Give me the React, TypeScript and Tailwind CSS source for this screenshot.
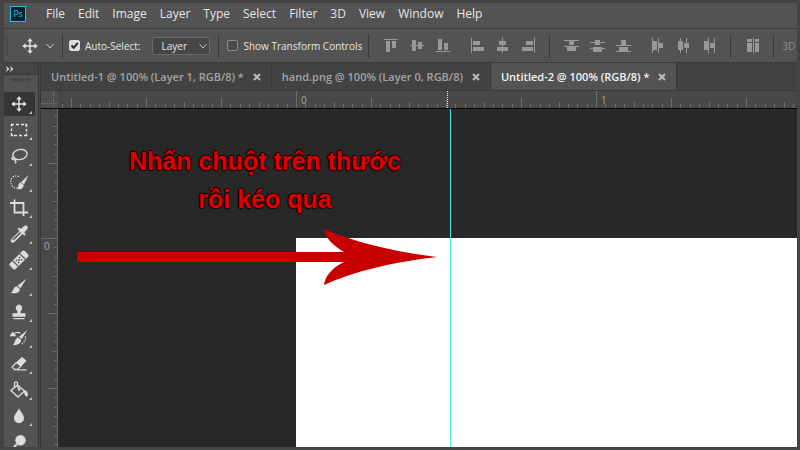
import type { ReactNode } from "react";

const menus = ["File", "Edit", "Image", "Layer", "Type", "Select", "Filter", "3D", "View", "Window", "Help"];

const tabs = [
  { title: "Untitled-1 @ 100% (Layer 1, RGB/8) *", active: false },
  { title: "hand.png @ 100% (Layer 0, RGB/8)", active: false },
  { title: "Untitled-2 @ 100% (RGB/8) *", active: true },
];

function MoveIcon() {
  return (
    <svg viewBox="0 0 16 16" className="size-4 shrink-0" fill="#e4e4e4">
      <path d="M7.3 3h1.4v4.3H13v1.4H8.7V13H7.3V8.7H3V7.3h4.3z" />
      <path d="M8 0.3l2.8 3.3H5.2zM8 15.7l2.8-3.3H5.2zM0.3 8l3.3-2.8v5.6zM15.7 8l-3.3-2.8v5.6z" />
    </svg>
  );
}

const c = "#dcdcdc";

const tools: { name: string; art: ReactNode; corner: boolean }[] = [
  {
    name: "Move",
    corner: true,
    art: (
      <g fill="#e8e8e8">
        <path d="M9.3 4h1.4v5.3H16v1.4h-5.3V16H9.3v-5.3H4V9.3h5.3z" />
        <path d="M10 2.3l2.8 3.3H7.2zM10 17.7l2.8-3.3H7.2zM2.3 10l3.3-2.8v5.6zM17.7 10l-3.3-2.8v5.6z" />
      </g>
    ),
  },
  {
    name: "Marquee",
    corner: true,
    art: <path d="M2.500 6.500V4.500H5M7 4.500h3M12 4.500h3M16 4.500h1.500V7M17.500 9v2.500M17.500 13.500v2H15M13 15.500h-3M8 15.500H5M4 15.500H2.500V13M2.500 11V8.500" fill="none" stroke="#e8e8e8" strokeWidth="1.400" />,
  },
  {
    name: "Lasso",
    corner: true,
    art: (
      <g fill="none" stroke={c} strokeWidth="1.400">
        <ellipse cx="11" cy="8.500" rx="7.200" ry="5" transform="rotate(-12 11 8.500)" />
        <path d="M5 11.500c-2.500-.5-2.800 1.500-1 2 1.700.2 2.500-1 1-2M5.300 13.500c1.500 1 1.800 2.500 1 4" />
      </g>
    ),
  },
  {
    name: "Quick selection",
    corner: true,
    art: (
      <g>
        <path d="M10 4.500C5 2.500 1.500 6 1.800 10c.2 4 3.500 6.500 6.500 5.800" fill="none" stroke={c} strokeWidth="1.300" strokeDasharray="1.300 1.300" />
        <path d="M19.500 3l-4.500 9.500-3-2.200zM11.500 10.500l3 2.200c.5 3.500-3 5.300-6.500 4.300 1.700-1 .5-5.500 3.500-6.500z" fill={c} />
      </g>
    ),
  },
  {
    name: "Crop",
    corner: true,
    art: <path d="M1 5h13.500v10M5.500 1.500v13H19M14.500 14v4" fill="none" stroke={c} strokeWidth="1.800" />,
  },
  {
    name: "Eyedropper",
    corner: true,
    art: (
      <g>
        <path d="M12 8l-8 8-.5 1 1-.5 8-8" fill="none" stroke={c} strokeWidth="3.600" strokeLinejoin="round" />
        <path d="M11.500 8.500l-7.500 7.500" fill="none" stroke="#535353" strokeWidth="1.600" />
        <path d="M8.500 5l1.500-1.500 2 1.500 2.700-2.700c2.900-2 5.300.7 3.300 3.300l-2.700 2.700 1.500 2-1.500 1.500z" fill={c} />
      </g>
    ),
  },
  {
    name: "Healing brush",
    corner: true,
    art: (
      <g transform="rotate(-45 10 10)">
        <rect x="-0.500" y="6" width="21" height="8" rx="1.800" fill={c} />
        <path d="M5 6v8M15 6v8" stroke="#535353" strokeWidth="1.200" />
        <path d="M7.200 7.700h1.500v1.500H7.200zM11.300 7.700h1.500v1.500h-1.500zM9.200 9.200h1.600v1.600H9.200zM7.200 10.800h1.500v1.500H7.200zM11.300 10.800h1.500v1.500h-1.500z" fill="#535353" />
      </g>
    ),
  },
  {
    name: "Brush",
    corner: true,
    art: <path d="M17.500 2.500l-6 9.800-3-2.600zM7.800 10.300l3 2.600c.3 3.700-4.500 5.200-9 3.800 2.800-1 2.300-5.900 6-6.400z" fill={c} />,
  },
  {
    name: "Clone stamp",
    corner: true,
    art: <path d="M10 2.500a3.500 3.500 0 0 1 2 6.200c-.6.700-.6 1.600-.3 2.500H16.500v3.600h-13v-3.600h4.800c.3-.9.300-1.800-.3-2.500A3.500 3.500 0 0 1 10 2.500zM4.500 16h11v1.300h-11z" fill={c} />,
  },
  {
    name: "History brush",
    corner: true,
    art: (
      <g>
        <path d="M18.500 2l-5.800 9-2.700-2.200zM9.300 9.500l2.700 2.300c.3 3.700-3.300 5.700-8.200 5.400 2.300-1.500 1.500-6.700 5.500-7.700z" fill={c} />
        <path d="M0.500 8.200L3.500 3.700l4.200 4.500z" fill={c} />
        <path d="M5 5.800c2-1.700 4.500-1.700 6.500-.5" fill="none" stroke={c} strokeWidth="1.300" />
        <path d="M16.300 8.500c.8 3-.8 6-3.500 7.500" fill="none" stroke={c} strokeWidth="1.300" strokeDasharray="1.200 1.300" />
      </g>
    ),
  },
  {
    name: "Eraser",
    corner: true,
    art: (
      <g>
        <path d="M13 3.500l4 3.300-5 5.200-4.500-3.500z" fill={c} stroke={c} strokeLinejoin="round" />
        <path d="M7.500 8.500l4.500 3.500-3.500 3.500H5.500L3 13z" fill="none" stroke={c} strokeWidth="1.300" strokeLinejoin="round" />
        <path d="M8 15.900h9.500" stroke={c} strokeWidth="1.200" />
      </g>
    ),
  },
  {
    name: "Paint bucket",
    corner: true,
    art: (
      <g>
        <path d="M8.500 5l7 6-6.500 6-7-6.500z" fill="none" stroke={c} strokeWidth="1.400" />
        <path d="M5.500 8V3.300c0-2 3-2 3 0V6c0 1.500 1 2 1.500 3" fill="none" stroke={c} strokeWidth="1.300" />
        <circle cx="10.200" cy="9.500" r="1.300" fill={c} />
        <path d="M14 9.500c3 .5 5 2.500 5 5 0 1.500-.8 2-1.500 2-1.800 0-2-3.500-3.500-7z" fill={c} />
      </g>
    ),
  },
  {
    name: "Blur",
    corner: true,
    art: <path d="M10 2c.6 3 5 6.100 5 10.200a5 5 0 0 1-10 0C5 8.100 9.400 5 10 2z" fill={c} />,
  },
  {
    name: "Dodge",
    corner: false,
    art: (
      <g>
        <circle cx="11.500" cy="8.300" r="5.200" fill={c} />
        <path d="M8 12l-5 5.500" stroke={c} strokeWidth="2" />
      </g>
    ),
  },
];

const alignGroups: { name: string; d: string }[][] = [
  [
    { name: "Align top edges", d: "M1 1h14v1H1zM3 3h4v11H3zM9 3h4v7H9z" },
    { name: "Align vertical centers", d: "M1 7h14v1H1zM3 2h4v11H3zM9 4h4v7H9z" },
    { name: "Align bottom edges", d: "M1 13h14v1H1zM3 1h4v11H3zM9 5h4v7H9z" },
  ],
  [
    { name: "Align left edges", d: "M2 0h1v15H2zM4 3h7v4H4zM4 9h11v4H4z" },
    { name: "Align horizontal centers", d: "M7 0h1v15H7zM4 3h7v4H4zM2 9h11v4H2z" },
    { name: "Align right edges", d: "M13 0h1v15h-1zM5 3h7v4H5zM1 9h11v4H1z" },
  ],
  [
    { name: "Distribute top edges", d: "M0 2h15v1H0zM5 3h5v4H5zM0 8h15v1H0zM3 9h9v4H3z" },
    { name: "Distribute vertical centers", d: "M0 4h15v1H0zM5 2h5v5H5zM0 10h15v1H0zM3 9h9v5H3z" },
    { name: "Distribute bottom edges", d: "M0 7h15v1H0zM5 2h5v5H5zM0 13h15v1H0zM3 9h9v4H3z" },
  ],
  [
    { name: "Distribute left edges", d: "M2 0h1v15H2zM3 3h4v9H3zM8 0h1v15H8zM9 5h4v5H9z" },
    { name: "Distribute horizontal centers", d: "M4 0h1v15H4zM2 3h5v9H2zM10 0h1v15h-1zM8 5h5v5H8z" },
    { name: "Distribute right edges", d: "M6 0h1v15H6zM2 3h4v9H2zM12 0h1v15h-1zM8 5h4v5H8z" },
  ],
];

function AlignGroup({ items }: { items: { name: string; d: string }[] }) {
  return (
    <div className="flex shrink-0 gap-2.5">
      {items.map((item) => (
        <button key={item.name} type="button" aria-label={item.name} className="size-4">
          <svg viewBox="0 0 16 16" className="size-4" fill="#989898" shapeRendering="crispEdges">
            <path d={item.d} />
          </svg>
        </button>
      ))}
    </div>
  );
}

function Divider() {
  return <div className="h-6 w-px shrink-0 bg-[#3a3a3a]" />;
}

const INCH = 300;
const STEP = INCH / 32;

function tickLength(i: number) {
  if (i % 32 === 0) return 17;
  if (i % 8 === 0) return 10;
  if (i % 4 === 0) return 6;
  return 4;
}

function TopRuler() {
  const zero = 239;
  const ticks = Array.from({ length: 240 }, (_, k) => k - 25);
  return (
    <svg className="h-[17px] min-w-0 flex-1" aria-hidden="true">
      {ticks.map((i) => (
        <rect key={i} x={Math.round(zero + i * STEP) - 1} y={17 - tickLength(i)} width="1" height={tickLength(i)} fill="#6e6e6e" />
      ))}
      {[0, 1].map((n) => (
        <text key={n} x={zero + 4 + n * INCH} y="13" fontSize="10" fill="#a4a4a4">{n}</text>
      ))}
      <path d="M389.500 0v17" stroke="#e8e8e8" strokeDasharray="1 1" />
    </svg>
  );
}

function SideRuler() {
  const zero = 129;
  const ticks = Array.from({ length: 160 }, (_, k) => k - 13);
  return (
    <svg className="h-full w-[17px] shrink-0 border-r border-[#6c6c6c]" aria-hidden="true">
      {ticks.map((i) => (
        <rect key={i} x={17 - tickLength(i)} y={Math.round(zero + i * STEP)} width={tickLength(i)} height="1" fill="#6a6a6a" />
      ))}
      <text x="3" y="141" fontSize="10" fill="#a4a4a4">0</text>
    </svg>
  );
}

export default function App() {
  return (
    <div className="flex h-screen flex-col overflow-hidden bg-[#444444] pt-[3px] pr-[3px] pb-[3px] pl-1 font-['Open_Sans','Noto_Sans',sans-serif] text-[#e6e6e6]">
      <nav className="flex h-[25px] shrink-0 items-center bg-[#535353] pb-1 pl-1.5" aria-label="Main">
        <div className="flex size-4 shrink-0 items-center justify-center border border-[#26bdec] bg-[#04202e] text-[9px] leading-none text-[#35c3ee]">Ps</div>
        <div className="ml-5 flex gap-[13px] text-xs leading-4">
          {menus.map((m) => (
            <button key={m} type="button">{m}</button>
          ))}
        </div>
      </nav>

      <div className="flex h-[35px] shrink-0 items-center overflow-hidden border-y border-[#3c3c3c] bg-[#535353] text-[10px] leading-4 whitespace-nowrap">
        <div className="ml-px h-5 w-[3px] shrink-0 bg-[repeating-linear-gradient(to_bottom,#444444_0_1px,#535353_1px_2px)]" />
        <div className="ml-3.5 flex shrink-0 items-center gap-2">
          <MoveIcon />
          <svg viewBox="0 0 8 8" className="size-2" fill="none" stroke="#c8c8c8" aria-hidden="true"><path d="M.5 2L4 6l3.500-4" /></svg>
        </div>
        <div className="ml-2 shrink-0"><Divider /></div>
        <label className="ml-1.5 flex shrink-0 items-center gap-[5px]">
          <span className="relative flex size-[11px]">
            <input type="checkbox" defaultChecked className="peer size-[11px] appearance-none rounded-xs border border-[#8c8c8c] checked:border-[#dcdcdc] checked:bg-[#dcdcdc]" />
            <svg viewBox="0 0 11 11" className="pointer-events-none absolute inset-0 hidden size-[11px] peer-checked:block" fill="none" stroke="#2c2c2c" strokeWidth="2"><path d="M2.500 5.500l2.200 2.300L8.800 3" /></svg>
          </span>
          Auto-Select:
        </label>
        <div className="relative ml-3 shrink-0">
          <select aria-label="Auto-select target" className="h-[18px] w-[58px] appearance-none rounded-xs border border-[#6b6b6b] bg-[#464646] pl-2 leading-4">
            <option>Layer</option>
            <option>Group</option>
          </select>
          <svg viewBox="0 0 8 8" className="pointer-events-none absolute top-[5px] right-[3px] size-2" fill="none" stroke="#c8c8c8"><path d="M.5 2L4 6l3.500-4" /></svg>
        </div>
        <div className="ml-2 shrink-0"><Divider /></div>
        <label className="ml-2 flex shrink-0 items-center gap-[5px]">
          <input type="checkbox" className="size-[11px] appearance-none rounded-xs border border-[#8c8c8c] bg-[#4a4a4a] checked:bg-[#dcdcdc]" />
          Show Transform Controls
        </label>
        <div className="ml-1.5 flex shrink-0 items-center">
          <Divider />
          <div className="ml-3.5 flex gap-[18px]">
            <AlignGroup items={alignGroups[0]} />
            <AlignGroup items={alignGroups[1]} />
          </div>
          <div className="ml-3"><Divider /></div>
          <div className="ml-3.5 flex gap-[18px]">
            <AlignGroup items={alignGroups[2]} />
            <AlignGroup items={alignGroups[3]} />
          </div>
          <div className="ml-3"><Divider /></div>
          <button type="button" aria-label="Auto-align layers" className="ml-3.5 size-4">
            <svg viewBox="0 0 16 16" className="size-4" fill="#989898" shapeRendering="crispEdges"><path d="M2 1h5v3H2zM2 5h5v9H2zM8 0h1v15H8zM10 1h4v3h-4zM10 5h4v9h-4z" /></svg>
          </button>
          <div className="ml-3"><Divider /></div>
          <span className="ml-2 text-[#8c8c8c]">3D</span>
        </div>
      </div>

      <div className="flex min-h-0 flex-1">
        <aside className="flex w-[34px] shrink-0 flex-col bg-[#535353]">
          <div className="flex h-3 shrink-0 items-center border-b border-[#393939] bg-[#444444] pl-0.5">
            <svg viewBox="0 0 8 6" className="h-1.5 w-2" fill="#d8d8d8" aria-hidden="true"><path d="M0 0l3.500 3L0 6l1-3zM4 0l3.500 3L4 6l1-3z" /></svg>
          </div>
          <div className="mx-auto mt-[3px] mb-2.5 h-1 w-5 shrink-0 bg-[repeating-linear-gradient(to_right,#404040_0_1px,#535353_1px_2px)]" />
          <div className="flex min-h-0 flex-col gap-0.5 overflow-hidden">
            {tools.map((t, i) => (
              <button
                key={t.name}
                type="button"
                aria-label={t.name}
                className={i === 0 ? "relative flex h-6 w-[31px] shrink-0 items-center rounded-xs bg-[#363636] pl-[5px]" : "relative flex h-6 w-[31px] shrink-0 items-center pl-[5px]"}
              >
                <svg viewBox="0 0 20 20" className="size-5">{t.art}</svg>
                {t.corner && <svg viewBox="0 0 3 3" className="absolute right-[3px] bottom-0.5 size-[3px]" fill="#c4c4c4"><path d="M3 0v3H0z" /></svg>}
              </button>
            ))}
          </div>
        </aside>
        <div className="w-[3px] shrink-0 border-x border-[#383838] bg-[#484848]" />

        <main className="flex min-w-0 flex-1 flex-col">
          <div role="tablist" className="flex h-7 shrink-0 overflow-hidden border-b border-[#393939] bg-[#424242] text-[11px] font-semibold whitespace-nowrap">
            {tabs.map((t) => (
              <div
                key={t.title}
                className={t.active ? "flex shrink-0 items-center gap-[9px] border-r border-[#383838] bg-[#535353] px-2.5 pt-px text-[#f4f4f4]" : "flex shrink-0 items-center gap-[9px] border-r border-[#383838] px-2.5 pt-px text-[#a4a4a4]"}
              >
                <button type="button" role="tab" aria-selected={t.active}>{t.title}</button>
                <button type="button" aria-label="Close" className="size-2">
                  <svg viewBox="0 0 8 8" className="size-2" stroke="#bcbcbc" strokeWidth="2"><path d="M1 1l6 6M7 1L1 7" /></svg>
                </button>
              </div>
            ))}
          </div>

          <div className="flex shrink-0 border-b border-[#080808] bg-[#484848]">
            <div className="flex size-[17px] shrink-0 bg-[#4f4f4f]">
              <svg viewBox="0 0 17 17" className="size-[17px]" stroke="#777777" strokeDasharray="1 1"><path d="M12.500 0v17M0 12.500h17" /></svg>
            </div>
            <TopRuler />
          </div>

          <div className="flex min-h-0 flex-1 bg-[#484848]">
            <SideRuler />
            <div className="relative min-w-0 flex-1 overflow-hidden bg-[#282828]">
              <div className="absolute top-[129px] right-0 bottom-0 left-[238px] bg-white" />
              <div className="absolute inset-y-0 left-[392px] w-px bg-[#4de9e9]" />
              <p className="absolute top-[33px] left-[57px] w-[300px] text-center font-['Liberation_Sans',sans-serif] text-[25px] leading-[38px] font-bold text-[#dc0000] [text-shadow:1px_0_1px_#200000,-1px_0_1px_#200000,0_1px_1px_#200000,0_-1px_1px_#200000]">
                Nhấn chuột trên thước
                <br />
                rồi kéo qua
              </p>
              <svg viewBox="0 0 360 56" className="absolute top-[120px] left-[19px] h-14 w-[360px]" fill="#c80000" aria-hidden="true">
                <path d="M0 23h267C255 16 248 8 247 0c30 13 70 23 113 28-43 5-83 14-113 28 1-9 8-17 20-23H0z" />
              </svg>
            </div>
          </div>
        </main>
      </div>
    </div>
  );
}
